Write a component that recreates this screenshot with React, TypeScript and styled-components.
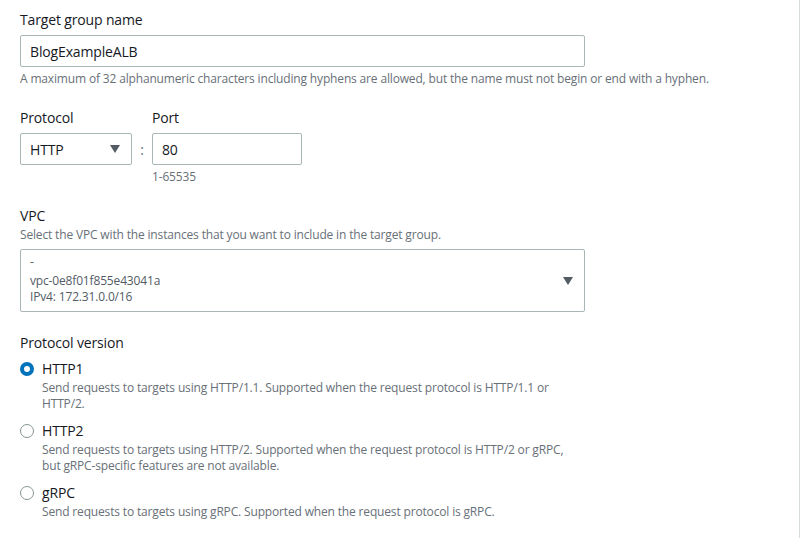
import styled, { createGlobalStyle } from "styled-components";

const GlobalStyle = createGlobalStyle`
  html, body {
    margin: 0;
    padding: 0;
    background: #ffffff;
  }
  body {
    font-family: "Open Sans", "Noto Sans", Arial, sans-serif;
    color: #16191f;
  }
`;

interface RadioOption {
  label: string;
  description: string[];
  checked: boolean;
}

const options: RadioOption[] = [
  {
    label: "HTTP1",
    description: [
      "Send requests to targets using HTTP/1.1. Supported when the request protocol is HTTP/1.1 or",
      "HTTP/2.",
    ],
    checked: true,
  },
  {
    label: "HTTP2",
    description: [
      "Send requests to targets using HTTP/2. Supported when the request protocol is HTTP/2 or gRPC,",
      "but gRPC-specific features are not available.",
    ],
    checked: false,
  },
  {
    label: "gRPC",
    description: [
      "Send requests to targets using gRPC. Supported when the request protocol is gRPC.",
    ],
    checked: false,
  },
];

const Caret = () => (
  <svg width="10" height="8" viewBox="0 0 10 8">
    <path d="M0 0 H10 L5 8 Z" fill="#545b64" />
  </svg>
);

export default function App(): JSX.Element {
  return (
    <>
      <GlobalStyle />
      <Page>
        <Form>
          <Field>
            <Label>Target group name</Label>
            <TextInput width={565}>BlogExampleALB</TextInput>
            <Hint>
              A maximum of 32 alphanumeric characters including hyphens are
              allowed, but the name must not begin or end with a hyphen.
            </Hint>
          </Field>

          <Field>
            <Row>
              <Column>
                <Label>Protocol</Label>
                <Select width={112}>
                  <span>HTTP</span>
                  <Caret />
                </Select>
              </Column>
              <Colon>:</Colon>
              <Column>
                <Label>Port</Label>
                <TextInput width={150}>80</TextInput>
                <Hint>1-65535</Hint>
              </Column>
            </Row>
          </Field>

          <Field>
            <Label>VPC</Label>
            <Description>
              Select the VPC with the instances that you want to include in the
              target group.
            </Description>
            <VpcSelect>
              <VpcLines>
                <VpcDash>-</VpcDash>
                <VpcLine>vpc-0e8f01f855e43041a</VpcLine>
                <VpcLine>IPv4: 172.31.0.0/16</VpcLine>
              </VpcLines>
              <Caret />
            </VpcSelect>
          </Field>

          <Field>
            <Label>Protocol version</Label>
            <RadioGroup>
              {options.map((o) => (
                <RadioItem key={o.label}>
                  <Radio checked={o.checked} />
                  <RadioText>
                    <RadioLabel>{o.label}</RadioLabel>
                    <RadioDesc>
                      {o.description.map((line) => (
                        <div key={line}>{line}</div>
                      ))}
                    </RadioDesc>
                  </RadioText>
                </RadioItem>
              ))}
            </RadioGroup>
          </Field>
        </Form>
      </Page>
    </>
  );
}

const Page = styled.div`
  width: 800px;
  height: 538px;
  border-right: 1px solid #d5dbdb;
  box-sizing: border-box;
  overflow: hidden;
`;

const Form = styled.div`
  display: flex;
  flex-direction: column;
  padding: 9px 0 0 20px;
`;

const Field = styled.div`
  display: flex;
  flex-direction: column;
  margin-bottom: 20px;
`;

const Label = styled.div`
  font-size: 14px;
  line-height: 22px;
  letter-spacing: -0.15px;
  color: #16191f;
  margin-bottom: 4px;
`;

const TextInput = styled.div<{ width: number }>`
  width: ${(p) => p.width}px;
  height: 32px;
  box-sizing: border-box;
  border: 1px solid #aab7b8;
  border-radius: 2px;
  padding: 0 9px;
  display: flex;
  align-items: center;
  font-size: 14px;
  letter-spacing: -0.15px;
  color: #16191f;
`;

const Hint = styled.div`
  font-size: 12px;
  line-height: 16px;
  letter-spacing: -0.16px;
  color: #687078;
  margin-top: 4px;
`;

const Description = styled.div`
  font-size: 12px;
  line-height: 16px;
  letter-spacing: -0.16px;
  color: #687078;
  margin-top: -4px;
  margin-bottom: 6px;
`;

const Row = styled.div`
  display: flex;
  align-items: flex-start;
`;

const Column = styled.div`
  display: flex;
  flex-direction: column;
`;

const Colon = styled.div`
  width: 20px;
  margin-top: 26px;
  height: 32px;
  display: flex;
  align-items: center;
  justify-content: center;
  font-size: 14px;
  color: #687078;
`;

const Select = styled.div<{ width: number }>`
  width: ${(p) => p.width}px;
  height: 32px;
  box-sizing: border-box;
  border: 1px solid #aab7b8;
  border-radius: 2px;
  padding: 0 11px 0 9px;
  display: flex;
  align-items: center;
  justify-content: space-between;
  font-size: 14px;
  letter-spacing: -0.15px;
  color: #16191f;
`;

const VpcSelect = styled.div`
  width: 565px;
  height: 63px;
  box-sizing: border-box;
  border: 1px solid #aab7b8;
  border-radius: 2px;
  padding: 0 11px 0 9px;
  display: flex;
  align-items: center;
  justify-content: space-between;
`;

const VpcLines = styled.div`
  display: flex;
  flex-direction: column;
`;

const VpcLine = styled.div`
  font-size: 12px;
  line-height: 16px;
  letter-spacing: -0.16px;
  color: #545b64;
`;

const VpcDash = styled(VpcLine)`
  margin-bottom: 3px;
  margin-top: -3px;
`;

const RadioGroup = styled.div`
  display: flex;
  flex-direction: column;
  gap: 8px;
`;

const RadioItem = styled.div`
  display: flex;
  align-items: flex-start;
  gap: 8px;
`;

const Radio = styled.span<{ checked: boolean }>`
  width: 14px;
  height: 14px;
  margin-top: 4px;
  box-sizing: border-box;
  border-radius: 50%;
  flex-shrink: 0;
  border: ${(p) => (p.checked ? "4px solid #0073bb" : "1px solid #879596")};
  background: #ffffff;
`;

const RadioText = styled.div`
  display: flex;
  flex-direction: column;
`;

const RadioLabel = styled.div`
  font-size: 14px;
  line-height: 22px;
  letter-spacing: -0.15px;
  color: #16191f;
`;

const RadioDesc = styled.div`
  font-size: 12px;
  line-height: 16px;
  letter-spacing: -0.16px;
  color: #687078;
`;
